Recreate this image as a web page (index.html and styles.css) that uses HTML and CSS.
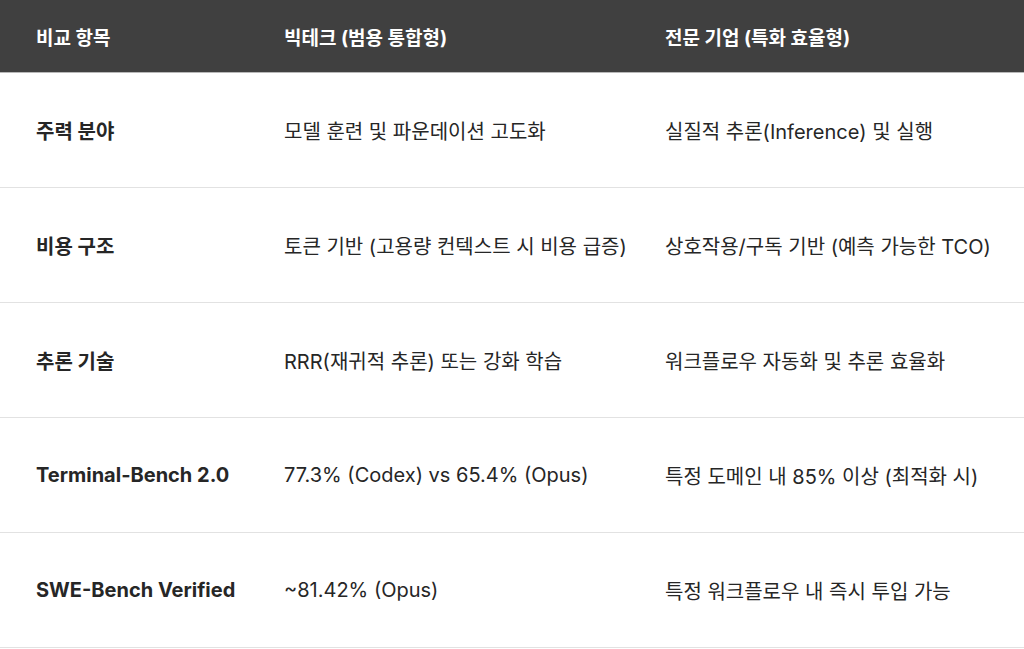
FILE: index.html
```html
<!DOCTYPE html>
<html lang="ko">
<head>
<meta charset="utf-8">
<link rel="stylesheet" href="styles.css">
</head>
<body>
<div class="table">
  <div class="row head">
    <div class="cell">비교 항목</div>
    <div class="cell">빅테크 (범용 통합형)</div>
    <div class="cell">전문 기업 (특화 효율형)</div>
  </div>
  <div class="row">
    <div class="cell key">주력 분야</div>
    <div class="cell">모델 훈련 및 파운데이션 고도화</div>
    <div class="cell">실질적 추론(Inference) 및 실행</div>
  </div>
  <div class="row">
    <div class="cell key">비용 구조</div>
    <div class="cell">토큰 기반 (고용량 컨텍스트 시 비용 급증)</div>
    <div class="cell">상호작용/구독 기반 (예측 가능한 TCO)</div>
  </div>
  <div class="row">
    <div class="cell key">추론 기술</div>
    <div class="cell">RRR(재귀적 추론) 또는 강화 학습</div>
    <div class="cell">워크플로우 자동화 및 추론 효율화</div>
  </div>
  <div class="row">
    <div class="cell key">Terminal-Bench 2.0</div>
    <div class="cell">77.3% (Codex) vs 65.4% (Opus)</div>
    <div class="cell">특정 도메인 내 85% 이상 (최적화 시)</div>
  </div>
  <div class="row">
    <div class="cell key">SWE-Bench Verified</div>
    <div class="cell">~81.42% (Opus)</div>
    <div class="cell">특정 워크플로우 내 즉시 투입 가능</div>
  </div>
</div>
</body>
</html>
```

FILE: styles.css
```css
html, body {
  margin: 0;
  padding: 0;
  background: #ffffff;
}
body {
  font-family: Inter, "Noto Sans CJK KR", sans-serif;
  color: #262626;
  font-size: 20px;
}
.table {
  display: flex;
  flex-direction: column;
  width: 1024px;
}
.row {
  display: grid;
  grid-template-columns: 248px 381px 1fr;
  height: 114px;
  align-items: center;
  border-bottom: 1px solid #e2e2e2;
}
.row.head {
  height: 72px;
  background: #404040;
  color: #ffffff;
  font-weight: 700;
  font-size: 19px;
  border-bottom: 1px solid #b8b8b8;
}
.cell {
  padding-left: 36px;
  white-space: nowrap;
}
.key {
  font-weight: 700;
}
```
